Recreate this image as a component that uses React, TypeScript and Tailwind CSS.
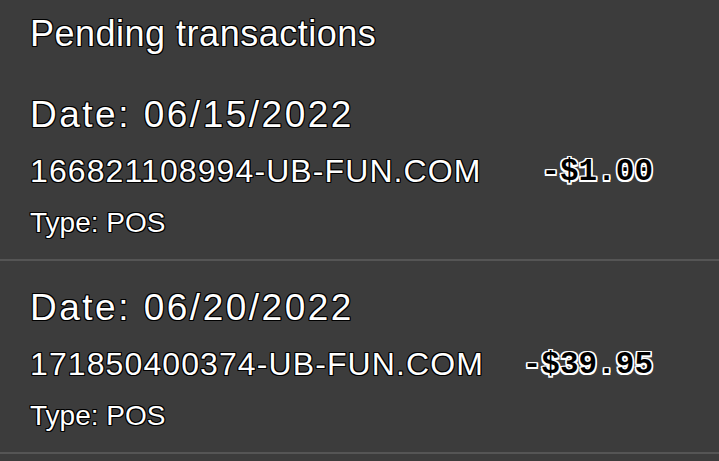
const transactions = [
  { id: 1, date: "06/15/2022", ref: "166821108994-UB-FUN.COM", amount: "-$1.00", type: "POS" },
  { id: 2, date: "06/20/2022", ref: "171850400374-UB-FUN.COM", amount: "-$39.95", type: "POS" },
];

const outlined =
  "text-white [text-shadow:1px_1px_0_#000,-1px_-1px_0_#000,1px_-1px_0_#000,-1px_1px_0_#000,0_1px_0_#000,0_-1px_0_#000,1px_0_0_#000,-1px_0_0_#000]";
const inverted =
  "text-black [text-shadow:1.5px_1.5px_0_#fff,-1.5px_-1.5px_0_#fff,1.5px_-1.5px_0_#fff,-1.5px_1.5px_0_#fff,0_1.5px_0_#fff,0_-1.5px_0_#fff,1.5px_0_0_#fff,-1.5px_0_0_#fff]";

export default function App() {
  return (
    <div className="w-[719px] h-[461px] overflow-hidden bg-[#3c3c3c] font-['Liberation_Sans',Arial,sans-serif]">
      <h1 className={`px-[30px] pt-[16px] pb-[16px] text-[36px] leading-[36px] tracking-[0.5px] font-normal ${outlined}`}>
        Pending transactions
      </h1>

      {transactions.map((t) => (
        <div key={t.id} className="border-b-2 border-[#555555] pl-[30px] pr-[66px] pt-[28px] pb-[22px]">
          <div className={`text-[37px] leading-[37px] tracking-[2.5px] ${outlined}`}>Date: {t.date}</div>
          <div className="mt-[22px] flex items-center justify-between">
            <span className={`text-[32px] leading-[32px] tracking-[1.1px] ${outlined}`}>{t.ref}</span>
            <span className={`font-['Liberation_Mono',monospace] text-[31px] leading-[31px] font-bold ${inverted}`}>
              {t.amount}
            </span>
          </div>
          <div className={`mt-[22px] text-[28px] leading-[28px] ${outlined}`}>Type: {t.type}</div>
        </div>
      ))}
    </div>
  );
}
